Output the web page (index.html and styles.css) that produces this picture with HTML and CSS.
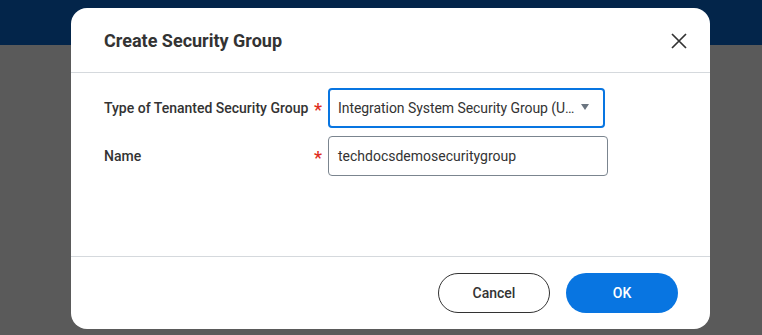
FILE: index.html
```html
<!DOCTYPE html>
<html lang="en">
<head>
<meta charset="utf-8">
<title>Create Security Group</title>
<link rel="stylesheet" href="styles.css">
</head>
<body>
<div class="page">
  <div class="topbar"></div>
  <div class="backdrop"></div>
</div>
<div class="dialog" role="dialog" aria-label="Create Security Group">
  <div class="dialog-header">
    <h2 class="dialog-title">Create Security Group</h2>
    <button class="close-btn" aria-label="Close">
      <svg width="16" height="16" viewBox="0 0 16 16"><path d="M1 1 L15 15 M15 1 L1 15" stroke="#333" stroke-width="1.7" fill="none"/></svg>
    </button>
  </div>
  <div class="dialog-body">
    <div class="form-row">
      <div class="label-cell"><span class="label">Type of Tenanted Security Group</span><span class="req">*</span></div>
      <div class="select-field">
        <span class="select-text">Integration System Security Group (U…</span>
        <svg class="caret" width="8" height="6" viewBox="0 0 8 6"><path d="M0 0 H8 L4 6 Z" fill="#6b7580"/></svg>
      </div>
    </div>
    <div class="form-row">
      <div class="label-cell"><span class="label">Name</span><span class="req">*</span></div>
      <div class="text-field">techdocsdemosecuritygroup</div>
    </div>
  </div>
  <div class="dialog-footer">
    <button class="btn btn-secondary">Cancel</button>
    <button class="btn btn-primary">OK</button>
  </div>
</div>
</body>
</html>
```
FILE: styles.css
```css
* { box-sizing: border-box; }
html, body { margin: 0; padding: 0; }
body {
  width: 762px;
  height: 335px;
  overflow: hidden;
  font-family: Roboto, "Liberation Sans", Arial, sans-serif;
  color: #333333;
  position: relative;
}
.page { display: flex; flex-direction: column; height: 335px; }
.topbar { height: 45px; background: #03254a; }
.backdrop { flex: 1; background: #5a5a5a; }

.dialog {
  position: absolute;
  left: 71px;
  top: 8px;
  width: 639px;
  height: 321px;
  background: #ffffff;
  border-radius: 16px;
  display: flex;
  flex-direction: column;
}
.dialog-header {
  height: 65px;
  border-bottom: 1px solid #d5d9dd;
  display: flex;
  align-items: center;
  justify-content: space-between;
  padding: 0 23px 0 33px;
}
.dialog-title {
  margin: 0;
  font-size: 18px;
  font-weight: 700;
  color: #333333;
}
.close-btn {
  border: 0;
  background: none;
  padding: 0;
  width: 16px;
  height: 16px;
  display: flex;
  margin-top: 2px;
}
.dialog-body {
  flex: 1;
  padding: 15px 0 0 33px;
  display: flex;
  flex-direction: column;
  gap: 8px;
  border-bottom: 1px solid #d5d9dd;
}
.form-row { display: flex; align-items: center; }
.label-cell {
  width: 224px;
  display: flex;
  justify-content: space-between;
  align-items: center;
  padding-right: 6px;
}
.label { font-size: 14px; font-weight: 500; color: #333333; }
.req { color: #de2e21; font-size: 18px; font-weight: 500; line-height: 1; margin-top: 3px; }
.select-field {
  width: 277px;
  height: 40px;
  border: 2px solid #0875e1;
  border-radius: 4px;
  display: flex;
  align-items: center;
  justify-content: space-between;
  padding: 0 14px 0 8px;
}
.select-text {
  font-size: 14px;
  color: #333333;
  white-space: nowrap;
  letter-spacing: -0.06px;
}
.caret { flex: none; margin-top: -2px; }
.text-field {
  width: 280px;
  height: 40px;
  border: 1px solid #7b858f;
  border-radius: 4px;
  display: flex;
  align-items: center;
  padding: 0 9px;
  font-size: 14px;
  color: #333333;
}
.dialog-footer {
  height: 72px;
  display: flex;
  justify-content: flex-end;
  align-items: center;
  gap: 16px;
  padding: 0 32px 0 0;
}
.btn {
  width: 112px;
  height: 40px;
  border-radius: 20px;
  font-family: Roboto, "Liberation Sans", Arial, sans-serif;
  font-size: 14px;
  font-weight: 500;
  cursor: pointer;
}
.btn-secondary { background: #ffffff; border: 1px solid #333333; color: #333333; }
.btn-primary { background: #0875e1; border: 0; color: #ffffff; }
```
